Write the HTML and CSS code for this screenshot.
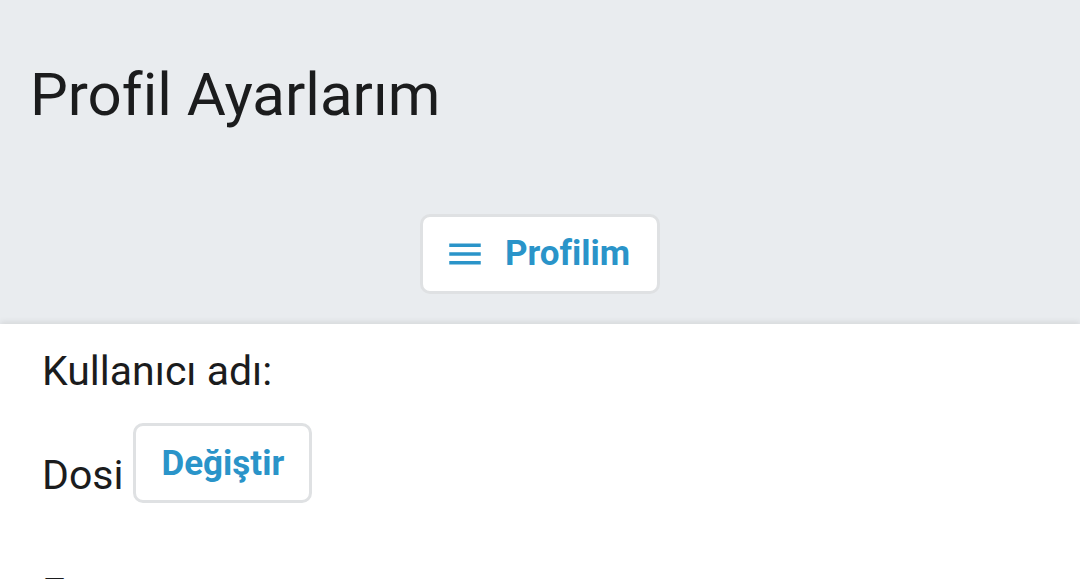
FILE: index.html
```html
<!DOCTYPE html>
<html lang="tr">
<head>
<meta charset="utf-8">
<title>Profil Ayarlarım</title>
<link rel="stylesheet" href="styles.css">
</head>
<body>
<header class="page-header">
  <h1 class="page-title">Profil Ayarlarım</h1>
  <div class="menu-row">
    <button class="btn btn-menu" type="button">
      <svg class="icon-menu" viewBox="0 0 24 24" width="42" height="42" aria-hidden="true">
        <path d="M3 18h18v-2H3v2zm0-5h18v-2H3v2zm0-7v2h18V6H3z" fill="currentColor"/>
      </svg>
      <span>Profilim</span>
    </button>
  </div>
</header>
<main class="content">
  <p class="field-label">Kullanıcı adı:</p>
  <div class="file-row">
    <span class="file-label">Dosi</span>
    <button class="btn btn-change" type="button">Değiştir</button>
  </div>
  <p class="field-label next-label">E-posta:</p>
</main>
</body>
</html>
```

FILE: styles.css
```css
html, body {
  margin: 0;
  padding: 0;
  background: #ffffff;
  overflow: hidden;
}

body {
  font-family: Roboto, "Noto Sans", "Liberation Sans", sans-serif;
  color: #1b1c1d;
  width: 1080px;
  height: 579px;
}

.page-header {
  background: #e9ecef;
  height: 324px;
  padding: 55px 0 0 0;
  box-sizing: border-box;
}

.page-title {
  margin: 0 0 0 30px;
  font-size: 60px;
  line-height: 80px;
  font-weight: 400;
  color: #1b1c1d;
}

.menu-row {
  display: flex;
  justify-content: center;
  margin-top: 79px;
}

.btn {
  font-family: Roboto, "Noto Sans", "Liberation Sans", sans-serif;
  font-weight: 700;
  font-size: 35px;
  line-height: 40px;
  color: #2a94c9;
  background: #ffffff;
  border: 3px solid #dfe1e3;
  border-radius: 10px;
  cursor: pointer;
}

.btn-menu {
  display: flex;
  align-items: center;
  gap: 19px;
  height: 80px;
  padding: 0 27px 0 21px;
  box-sizing: border-box;
}

.icon-menu {
  display: block;
  width: 42px;
  height: 42px;
}

.content {
  position: relative;
  background: #ffffff;
  box-shadow: 0 -2px 6px rgba(0, 0, 0, 0.09);
  padding: 22px 0 0 42px;
  height: 255px;
  box-sizing: border-box;
}

.field-label {
  margin: 0;
  font-size: 41px;
  line-height: 50px;
}

.file-row {
  display: flex;
  align-items: flex-start;
  margin-top: 27px;
}

.file-label {
  font-size: 41px;
  line-height: 50px;
  margin-top: 27px;
  margin-right: 10px;
}

.btn-change {
  padding: 18px 25px 16px 25px;
}

.next-label {
  margin-top: 65px;
}
```
